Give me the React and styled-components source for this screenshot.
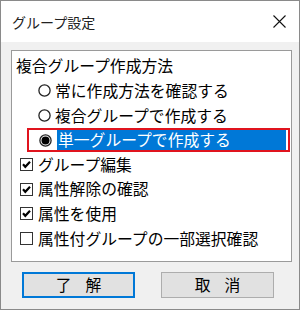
import React from 'react'
import styled, { createGlobalStyle } from 'styled-components'

const GlobalStyle = createGlobalStyle`
html, body {
    margin: 0;
    padding: 0;
    background: #f0f0f0;
}
* {
    box-sizing: border-box;
}
`

const Window = styled.div`
width: 300px;
height: 310px;
display: flex;
flex-direction: column;
border: 1px solid #8a8a8a;
background: #f0f0f0;
font-family: "Noto Sans CJK JP", "Noto Sans", sans-serif;
color: #000;
`

const TitleBar = styled.div`
height: 41px;
flex-shrink: 0;
background: #fff;
display: flex;
align-items: center;
justify-content: space-between;
padding: 0 13px 0 11px;
font-size: 14px;
color: #222;
`

const Body = styled.div`
flex: 1;
display: flex;
flex-direction: column;
padding: 8px 7px 0 10px;
`

const Panel = styled.div`
height: 212px;
background: #fff;
border: 1px solid #9a9a9a;
padding-top: 3px;
display: flex;
flex-direction: column;
`

const Row = styled.div`
height: 24.6px;
flex-shrink: 0;
display: flex;
align-items: center;
padding-left: ${p => p.$indent}px;
font-size: 15.8px;
line-height: 1;
white-space: nowrap;
`

const SelectedRow = styled.div`
height: 24.6px;
flex-shrink: 0;
margin: 0 1px 0 15px;
border: 2px solid #e0141e;
display: flex;
align-items: center;
padding: 0 2px 0 10px;
font-size: 15.8px;
line-height: 1;
white-space: nowrap;
`

const Highlight = styled.span`
flex: 1;
align-self: stretch;
display: flex;
align-items: center;
margin-left: 5px;
padding-left: 1px;
background: #0078d7;
color: #fff;
`

const Label = styled.span`
margin-left: ${p => p.$gap}px;
`

const Footer = styled.div`
display: flex;
justify-content: space-between;
padding: 10px 18px 0 11px;
`

const Button = styled.div`
width: 113px;
height: 26px;
display: flex;
align-items: center;
justify-content: center;
gap: 14px;
background: #e1e1e1;
border: ${p => (p.$focused ? '2px solid #0078d7' : '1px solid #adadad')};
font-size: 15.8px;
line-height: 1;
`

function CloseIcon() {
    return (
        <svg width="13" height="13" viewBox="0 0 13 13">
            <path d="M0.5 0.5 L12.5 12.5 M12.5 0.5 L0.5 12.5" stroke="#111" strokeWidth="1.1" fill="none" />
        </svg>
    )
}

function Radio({ checked }) {
    return (
        <svg width="13" height="13" viewBox="0 0 13 13" style={{ flexShrink: 0 }}>
            <circle cx="6.5" cy="6.5" r="5.6" fill="#fff" stroke="#222" strokeWidth="1.3" />
            {checked && <circle cx="6.5" cy="6.5" r="4" fill="#000" />}
        </svg>
    )
}

function Checkbox({ checked }) {
    return (
        <svg width="13" height="13" viewBox="0 0 13 13" style={{ flexShrink: 0 }}>
            <rect x="0.5" y="0.5" width="12" height="12" fill="#fff" stroke="#333" />
            {checked && <path d="M3 6.3 L5.3 8.8 L10 3.8" stroke="#000" strokeWidth="2.2" fill="none" />}
        </svg>
    )
}

const checks = [
    { label: 'グループ編集', checked: true },
    { label: '属性解除の確認', checked: true },
    { label: '属性を使用', checked: true },
    { label: '属性付グループの一部選択確認', checked: false },
]

export default function App() {
    return (
        <>
            <GlobalStyle />
            <Window>
                <TitleBar>
                    <span>グループ設定</span>
                    <CloseIcon />
                </TitleBar>
                <Body>
                    <Panel>
                        <Row $indent={4}>複合グループ作成方法</Row>
                        <Row $indent={26}>
                            <Radio />
                            <Label $gap={4}>常に作成方法を確認する</Label>
                        </Row>
                        <Row $indent={26}>
                            <Radio />
                            <Label $gap={4}>複合グループで作成する</Label>
                        </Row>
                        <SelectedRow>
                            <Radio checked />
                            <Highlight>単一グループで作成する</Highlight>
                        </SelectedRow>
                        {checks.map(c => (
                            <Row key={c.label} $indent={8}>
                                <Checkbox checked={c.checked} />
                                <Label $gap={5}>{c.label}</Label>
                            </Row>
                        ))}
                    </Panel>
                    <Footer>
                        <Button $focused>
                            <span>了</span>
                            <span>解</span>
                        </Button>
                        <Button>
                            <span>取</span>
                            <span>消</span>
                        </Button>
                    </Footer>
                </Body>
            </Window>
        </>
    )
}
